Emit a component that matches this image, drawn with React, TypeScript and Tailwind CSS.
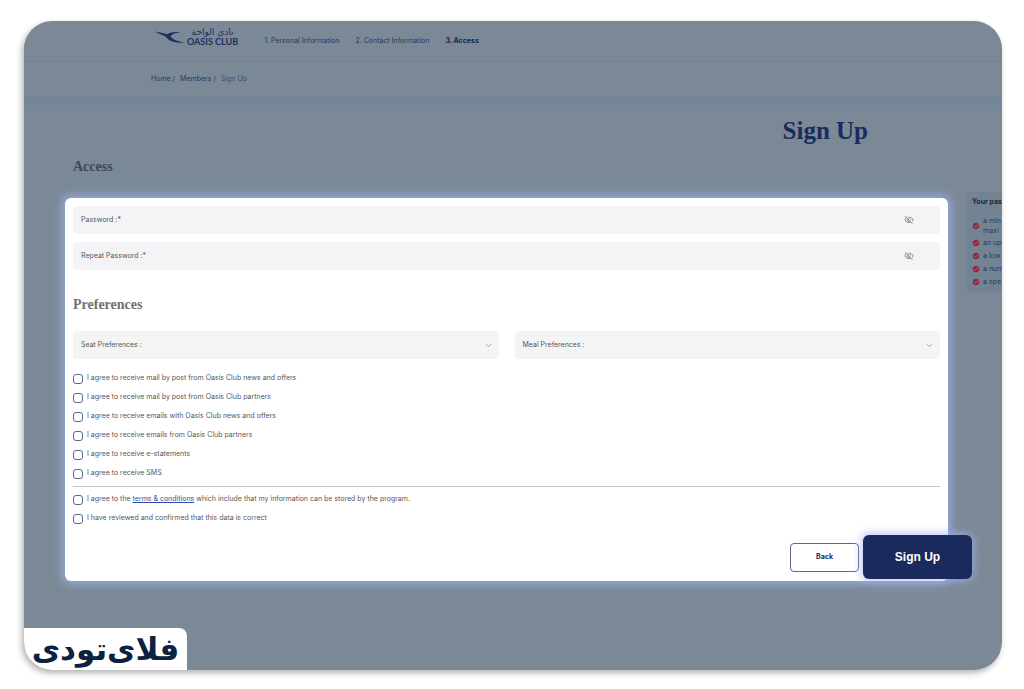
import React, { useState } from "react";
import { ChevronDown } from "lucide-react";
import { MdCheckCircle, MdOutlineVisibilityOff } from "react-icons/md";

const steps = [
  { label: "1. Personal Information", active: false },
  { label: "2. Contact Information", active: false },
  { label: "3. Access", active: true },
];

const agreements = [
  "I agree to receive mail by post from Oasis Club news and offers",
  "I agree to receive mail by post from Oasis Club partners",
  "I agree to receive emails with Oasis Club news and offers",
  "I agree to receive emails from Oasis Club partners",
  "I agree to receive e-statements",
  "I agree to receive SMS",
];

const rules = ["an up", "a low", "a num", "a spe"];

const OasisLogo: React.FC = () => (
  <a href="#" className="flex items-center gap-0.5 text-[#1d2f62]">
    <svg viewBox="0 0 30 18" className="h-[18px] w-[30px]" fill="currentColor">
      <path d="M0 3.2C4.500 4.600 8.500 4.900 12.300 6.200C15.500 4.300 19.500 3.700 26 4.300C20.500 4.800 17 6 15.500 8.300C17.800 11.700 22.500 13.300 29 14.400C20.500 15.600 14.500 13.300 11.200 9.300C9 7 4 6.300 0 3.200Z" />
    </svg>
    <span className="flex flex-col items-center">
      <span dir="rtl" className="font-['DejaVu_Sans',sans-serif] text-[9px] leading-[10px]">
        نادي الواحة
      </span>
      <span className="font-[Lato,sans-serif] text-[9px] leading-[10px] font-bold">
        OASIS CLUB
      </span>
    </span>
  </a>
);

const PasswordField: React.FC<{ id: string; label: string }> = ({ id, label }) => {
  const [visible, setVisible] = useState(false);

  return (
    <div className="flex h-7 items-center rounded bg-[#f4f4f6] pr-[26px] pl-2">
      <label htmlFor={id}>{label}</label>
      <input
        id={id}
        type={visible ? "text" : "password"}
        className="ml-2 h-full min-w-0 flex-1 bg-transparent outline-none"
      />
      <button
        type="button"
        aria-label="Toggle password visibility"
        onClick={() => setVisible(!visible)}
        className="text-[#8a8a8e]"
      >
        <MdOutlineVisibilityOff size={10} />
      </button>
    </div>
  );
};

const SelectField: React.FC<{ id: string; label: string }> = ({ id, label }) => (
  <div className="relative flex h-7 flex-1 items-center rounded bg-[#f4f4f4] pl-2">
    <label htmlFor={id}>{label}</label>
    <select id={id} className="h-full min-w-0 flex-1 appearance-none bg-transparent outline-none">
      <option value="" />
    </select>
    <ChevronDown
      size={9}
      strokeWidth={2}
      className="pointer-events-none absolute right-1.5 text-[#8a8a8e]"
    />
  </div>
);

const Checkbox: React.FC<{ id: string; children: React.ReactNode }> = ({ id, children }) => (
  <div className="flex h-[19px] items-center gap-1">
    <input
      id={id}
      type="checkbox"
      className="size-[10px] appearance-none rounded-[3px] border border-[#5c6590] bg-white checked:bg-[#1b2a5c]"
    />
    <label htmlFor={id}>{children}</label>
  </div>
);

const App: React.FC = () => {
  return (
    <div className="flex min-h-screen bg-white pt-[21px] pr-[22px] pb-[19px] pl-6 font-[Inter,'Liberation_Sans',sans-serif] text-[7px] text-[#55565a]">
      <main className="relative flex-1 overflow-hidden rounded-[28px] bg-[#7b8997] shadow-[-2px_3px_6px_rgba(0,0,0,0.3)]">
        <header className="flex h-[41px] items-center gap-[26px] border-b border-[#6f8192] pl-[131px]">
          <div className="-mt-2">
            <OasisLogo />
          </div>
          <nav className="flex gap-4 text-[#263859]">
            {steps.map((step) => (
              <a key={step.label} href="#" className={step.active ? "font-bold text-[#14264d]" : ""}>
                {step.label}
              </a>
            ))}
          </nav>
        </header>

        <nav className="flex h-[35px] items-center gap-[5px] pl-[127px] text-[#263859]">
          <a href="#">Home /</a>
          <a href="#">Members /</a>
          <span className="text-[#3f4d63]">Sign Up</span>
        </nav>
        <div className="h-2 bg-[#738699]" />

        <h1 className="pt-1.5 pr-[134px] text-right font-['Liberation_Serif',serif] text-[25px] leading-10 font-bold text-[#1a2b5f]">
          Sign Up
        </h1>
        <h2 className="mt-1.5 pl-[49px] font-['Liberation_Serif',serif] text-sm font-bold text-[#3c4858]">
          Access
        </h2>

        <div className="flex items-start gap-[18px] pt-[15px] pl-[41px]">
          <form
            onSubmit={(e) => e.preventDefault()}
            className="mt-[6px] flex min-w-0 flex-1 flex-col rounded-md bg-white px-2 pt-2 pb-0.5 shadow-[0_0_10px_3px_rgba(160,180,240,0.75)]"
          >
            <div className="flex flex-col gap-2">
              <PasswordField id="password" label="Password :*" />
              <PasswordField id="repeat-password" label="Repeat Password :*" />
            </div>

            <h2 className="mt-[25px] font-['Liberation_Serif',serif] text-sm font-bold text-[#707174]">
              Preferences
            </h2>
            <div className="mt-4 flex gap-4">
              <SelectField id="seat" label="Seat Preferences :" />
              <SelectField id="meal" label="Meal Preferences :" />
            </div>

            <div className="mt-[10px]">
              {agreements.map((text, i) => (
                <Checkbox key={text} id={`agreement-${i}`}>
                  {text}
                </Checkbox>
              ))}
            </div>
            <hr className="my-[3px] border-[#c4c4c8]" />
            <Checkbox id="terms">
              I agree to the{" "}
              <a href="#" className="text-[#2f4aa8] underline">
                terms &amp; conditions
              </a>{" "}
              which include that my information can be stored by the program.
            </Checkbox>
            <Checkbox id="reviewed">I have reviewed and confirmed that this data is correct</Checkbox>

            <div className="mt-[7px] -mr-8 flex items-center justify-end gap-1">
              <button
                type="button"
                className="h-[29px] w-[69px] rounded border border-[#5c6590] bg-white font-bold text-[#1b2a5c]"
              >
                Back
              </button>
              <button
                type="submit"
                className="h-11 w-[109px] rounded-md bg-[#1b2a5c] font-['Liberation_Sans',sans-serif] text-xs font-bold text-white shadow-[0_0_8px_2px_rgba(160,180,240,0.7)]"
              >
                Sign Up
              </button>
            </div>
          </form>

          <aside className="w-9 shrink-0 rounded-l bg-[#748393] py-1 pl-1.5 whitespace-nowrap text-[#2d394c]">
            <h3 className="mb-2 leading-3 font-bold text-[#1b2638]">Your pas</h3>
            <ul>
              <li className="flex items-center gap-[3px] leading-[10px]">
                <MdCheckCircle size={8} className="shrink-0 text-[#9c2238]" />
                <span>
                  a min
                  <br />
                  maxi
                </span>
              </li>
              {rules.map((rule) => (
                <li key={rule} className="flex items-center gap-[3px] leading-[13px]">
                  <MdCheckCircle size={8} className="shrink-0 text-[#9c2238]" />
                  <span>{rule}</span>
                </li>
              ))}
            </ul>
          </aside>
        </div>

        <div
          dir="rtl"
          className="absolute bottom-0 left-0 flex h-[42px] w-[163px] items-center justify-center rounded-tr-lg bg-white font-['DejaVu_Sans',sans-serif] text-[31px] leading-none font-bold text-[#0b2340]"
        >
          فلای‌تودی
        </div>
      </main>
    </div>
  );
};

export default App;
